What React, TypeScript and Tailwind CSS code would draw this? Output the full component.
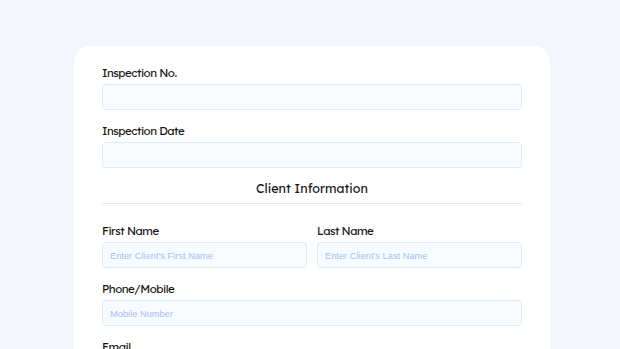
import React from "react";

const font = { fontFamily: "Lexend, Inter, 'Noto Sans', sans-serif" };

function Field({ label, placeholder }: { label: string; placeholder?: string }) {
  return (
    <div className="flex flex-col gap-[3px] w-full">
      <label className="h-4 text-[11.5px] leading-4 font-normal tracking-[-0.5px] text-[#161616]">{label}</label>
      <input
        readOnly
        placeholder={placeholder}
        className="h-[26px] w-full rounded-[4px] border border-[#e0e9f7] bg-[#f8fbff] px-[7px] pt-[1px] text-[9.3px] outline-none placeholder:text-[#a6bff0]"
        style={{ fontFamily: "'Liberation Sans', Arial, sans-serif" }}
      />
    </div>
  );
}

export default function App() {
  return (
    <div className="h-[349px] overflow-hidden bg-[#f3f6fc] flex pl-[74px] pt-[46px]" style={font}>
      <div className="w-[476px] bg-white rounded-t-[16px] px-7 pt-[19px] flex flex-col">
        <Field label="Inspection No." />
        <div className="mt-[13px]">
          <Field label="Inspection Date" />
        </div>
        <div className="mt-[11px] h-[25px] pb-[6px] border-b border-[#e4e7ec] text-center text-[12.5px] leading-[18px] font-normal text-[#161616]">
          Client Information
        </div>
        <div className="mt-[19px] flex gap-[10px]">
          <Field label="First Name" placeholder="Enter Client's First Name" />
          <Field label="Last Name" placeholder="Enter Client's Last Name" />
        </div>
        <div className="mt-[13px]">
          <Field label="Phone/Mobile" placeholder="Mobile Number" />
        </div>
        <div className="mt-[13px]">
          <Field label="Email" placeholder="Email Address" />
        </div>
      </div>
    </div>
  );
}
